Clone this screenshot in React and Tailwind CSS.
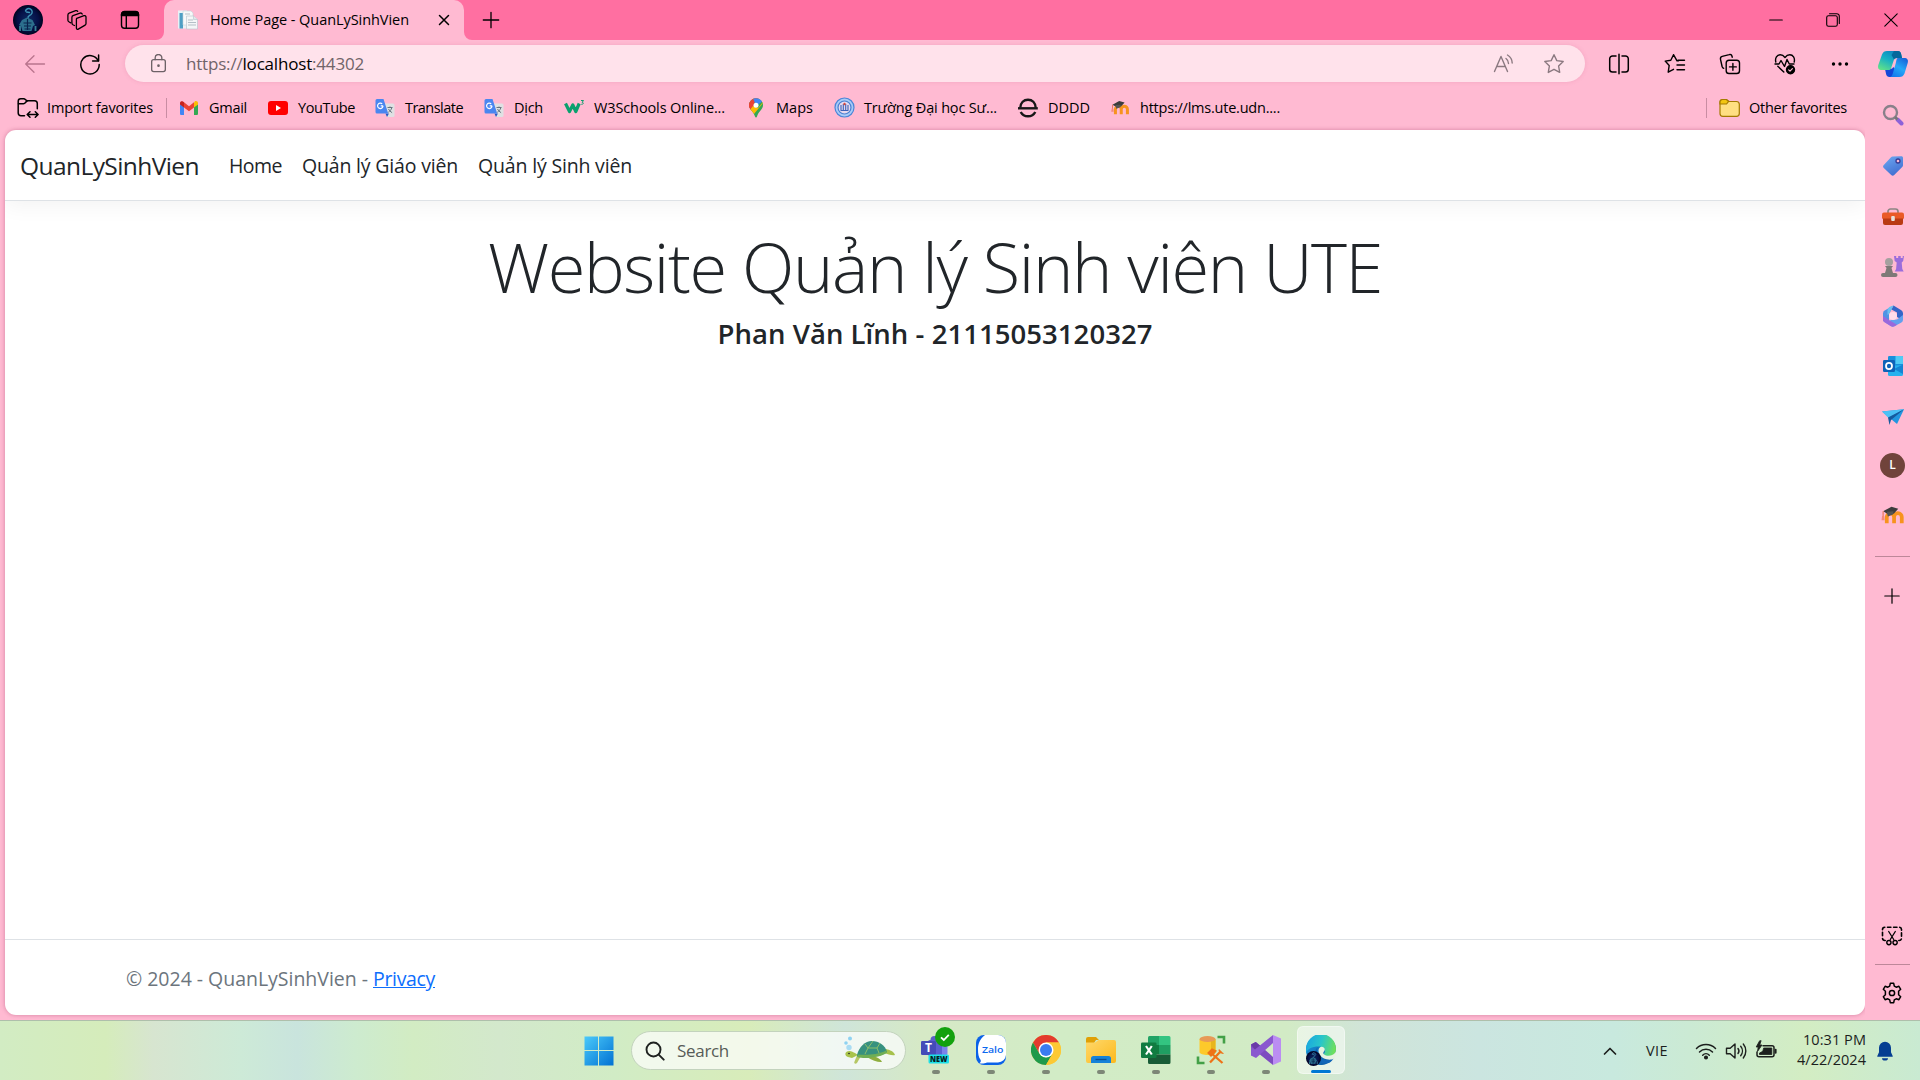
import { useLayoutEffect, useRef } from "react";

/* Single line of text whose letter spacing is tuned so that it fills `w` pixels. */
function Line({ w, className = "", children }) {
  const ref = useRef(null);
  useLayoutEffect(() => {
    const el = ref.current;
    el.style.letterSpacing = "0px";
    const natural = el.getBoundingClientRect().width;
    el.style.letterSpacing = `${(w - natural) / el.textContent.length}px`;
  }, [w]);
  return (
    <span ref={ref} className={`inline-block shrink-0 whitespace-nowrap ${className}`}>
      {children}
    </span>
  );
}

function Icon({ size = 20, className = "", children, vb = "0 0 20 20", sw = 1.3 }) {
  return (
    <svg width={size} height={size} viewBox={vb} className={`shrink-0 ${className}`} fill="none" stroke="currentColor" strokeWidth={sw} strokeLinecap="round" strokeLinejoin="round">
      {children}
    </svg>
  );
}

const Avatar = ({ size = 30, id = "av" }) => (
  <svg width={size} height={size} viewBox="0 0 30 30" className="shrink-0">
    <defs>
      <radialGradient id={id}>
        <stop offset="0" stopColor="#0c2a63" />
        <stop offset="0.7" stopColor="#050f45" />
        <stop offset="1" stopColor="#01031f" />
      </radialGradient>
    </defs>
    <circle cx="15" cy="15" r="15" fill={`url(#${id})`} />
    <g fill="none" stroke="#3d93b5" strokeWidth="1.4" strokeLinecap="round">
      <path d="M12.500 6a3.400 3.400 0 1 1 5.500 3.500c-1.500 1.200-3.500 1.200-3 3.500" />
      <path d="M13.500 7l3 .5" />
    </g>
    <path d="M9 15l5-2.500 5.500 2.500 2.500 5-2 1-1.500 5h-9l-1.500-5-2-1z" fill="#2c6f8d" />
    <path d="M10.500 18h8M11 21h7M11.500 24h6M14.500 14v11" stroke="#08224d" strokeWidth="1.2" />
    <path d="M7 21v5M22.500 21v5" stroke="#377f96" strokeWidth="1.8" />
  </svg>
);

const Workspaces = () => (
  <Icon size={22} vb="0 0 22 22" sw={1.3}>
    <path d="M10.700 9.300l7.300-2.600c1-.3 2 .3 2 1.300v6.500c0 .7-.3 1.300-.9 1.600l-6.800 4c-1 .5-1.900 0-1.900-1V10.400c0-.5 0-.8.3-1.100z" />
    <path d="M8.500 16.500l-1.200-.5c-.9-.4-1.400-.9-1.400-1.900V8.400c0-.9.3-1.400 1.100-1.700l7-2.600c1-.3 1.800 0 2.200 1" />
    <path d="M4.800 13.800l-1.600-.8c-.8-.4-1.300-.9-1.300-1.800V6c0-.9.400-1.500 1.200-1.800l6.600-2.500c.8-.3 1.600 0 2 .7" />
  </Icon>
);

const TabActions = () => (
  <Icon size={20} sw={1.4}>
    <rect x="1.500" y="1.700" width="17" height="16.600" rx="3" />
    <path d="M1.500 5.500V4.500a3 3 0 0 1 3-3h11a3 3 0 0 1 3 3v1z" fill="currentColor" />
    <path d="M6.300 6v12" />
  </Icon>
);

const PageIcon = () => (
  <svg width="20" height="20" viewBox="0 0 20 20" className="shrink-0">
    <rect x="0" y="0.500" width="9" height="18" fill="#e9f1f5" />
    <rect x="1.500" y="3" width="3.500" height="15.500" fill="#4d9fc4" />
    <path d="M5 1h8l2 2v12H5z" fill="#f7f9fa" stroke="#c5d3da" strokeWidth=".6" />
    <path d="M8.500 6h7l4 3.500V19h-11z" fill="#f4f6f7" stroke="#b5c3cb" strokeWidth=".6" />
    <path d="M10 10h5M10 12.500h8M10 15h8M7 4h5" stroke="#b3bfc6" strokeWidth="1" />
    <path d="M15.500 6v3.500h4" fill="#dfe7eb" stroke="#b5c3cb" strokeWidth=".6" />
  </svg>
);

const GmailIcon = () => (
  <svg width="20" height="20" viewBox="0 0 20 20" className="shrink-0">
    <path d="M1 6v9.500A1.300 1.300 0 0 0 2.300 17H5V8.500z" fill="#4285f4" />
    <path d="M15 8.500V17h2.700a1.300 1.300 0 0 0 1.300-1.500V6z" fill="#34a853" />
    <path d="M15 4.800v4.700l4-3V5c0-1.900-2-2.700-3.300-1.600z" fill="#fbbc04" />
    <path d="M5 9.500V4.300l5 3.900 5-3.900v5.200l-5 3.800z" fill="#ea4335" />
    <path d="M1 5v1.500l4 3V4.300l-.7-.6C3 2.700 1 3.300 1 5z" fill="#c5221f" />
  </svg>
);

const YouTubeIcon = () => (
  <svg width="20" height="20" viewBox="0 0 20 20" className="shrink-0">
    <rect y="3" width="20" height="14" rx="3" fill="#ff0000" />
    <path d="M8 7v6l5-3z" fill="#fff" />
  </svg>
);

const TranslateIcon = () => (
  <svg width="20" height="20" viewBox="0 0 20 20" className="shrink-0">
    <path d="M8 5.500h10a1.500 1.500 0 0 1 1.500 1.500v10.500A1.500 1.500 0 0 1 18 19h-6z" fill="#dfe1e3" />
    <path d="M10.500 15.500h3.500L12 19z" fill="#2a56c6" />
    <path d="M2 1h6.500l4.700 14.500H2A1.500 1.500 0 0 1 .5 14V2.500A1.500 1.500 0 0 1 2 1z" fill="#4a86f0" />
    <path d="M8 7.800H5.700M8 7.800a2.700 2.700 0 1 1-.8-1.900" fill="none" stroke="#fff" strokeWidth="1.200" />
    <path d="M12.500 9.500h5M15 8.500v1M16.800 9.800c-.5 2-2 3.500-3.500 4.500M13.500 11c.8 1.600 2 2.700 3.600 3.700" fill="none" stroke="#66757f" strokeWidth="1" />
  </svg>
);

const W3Icon = () => (
  <svg width="22" height="20" viewBox="0 0 22 20" className="shrink-0">
    <path d="M1.500 5.500l4 8 3.300-6.500 3 6.500 3.400-8" fill="none" stroke="#0aa06e" strokeWidth="3.200" strokeLinejoin="round" />
    <path d="M17 2.500h2.500l-1.300 1.800c1.500 0 1.600 2.300-.9 2" fill="none" stroke="#0aa06e" strokeWidth="1" />
  </svg>
);

const MapsIcon = () => (
  <svg width="20" height="20" viewBox="0 0 20 20" className="shrink-0">
    <defs>
      <clipPath id="pin">
        <path d="M10 0.300a7 7 0 0 0-7 7c0 4.200 4.500 6 6 11.200.3 1.300 1.700 1.300 2 0C12.500 13.300 17 11.500 17 7.300a7 7 0 0 0-7-7z" />
      </clipPath>
    </defs>
    <g clipPath="url(#pin)">
      <path d="M0 0h20v20H0z" fill="#34a853" />
      <path d="M0 14L14 -1H0z" fill="#ea4335" />
      <path d="M7 0h10v3l-7 5z" fill="#4285f4" />
      <path d="M2 8l3-4.500L10 7 4 14z" fill="#ea4335" />
      <path d="M3 13l4-5 5 2 5-6v1L8 16z" fill="#fbbc04" />
    </g>
    <circle cx="10" cy="7.300" r="2.500" fill="#fff" />
  </svg>
);

const SchoolIcon = () => (
  <svg width="21" height="21" viewBox="0 0 21 21" className="shrink-0">
    <circle cx="10.500" cy="10.500" r="9.500" fill="#a9cbf8" stroke="#4a86d8" strokeWidth="1.200" />
    <circle cx="10.500" cy="10.500" r="6.500" fill="#e6d9ee" stroke="#4a7fd0" strokeWidth="1.200" />
    <path d="M7 8v5M9.300 7v7M11.700 7v7M14 8v5M6.500 13.500h8" stroke="#3d62b8" strokeWidth="1.100" />
    <circle cx="10.500" cy="7" r="1.200" fill="#d6493c" />
  </svg>
);

const RingEIcon = () => (
  <svg width="20" height="20" viewBox="0 0 20 20" className="shrink-0" fill="none" stroke="#171717" strokeWidth="2.400">
    <path d="M2.300 9.800C2.500 4.500 5.800 1.700 10 1.700s7.500 2.800 7.700 8.100" />
    <path d="M0 10.300h19.800" strokeWidth="2.400" />
    <path d="M2.700 14c1.500 2.800 4.200 4.300 7.300 4.300s5.800-1.500 7.300-4.300" />
  </svg>
);

const MoodleIcon = ({ size = 20 }) => (
  <svg width={size} height={size} viewBox="0 0 24 24" className="shrink-0">
    <path d="M6.500 19.500v-6a3.500 3.500 0 0 1 7 0v6M13.500 13.500a3.700 3.700 0 0 1 7.400 0v6" fill="none" stroke="#f7931e" strokeWidth="3.600" />
    <path d="M3 8l8-4.500 6.500 2-4 4.500-4.500 1.500z" fill="#3c3c3c" />
    <path d="M6.500 8.500l1 4.500 5-2 .5-3z" fill="#555" />
    <path d="M3 8v6" stroke="#eb7a63" strokeWidth="1.200" />
    <path d="M2 12.500h2l.5 4H1.500z" fill="#f4897a" />
  </svg>
);

const ImportIcon = () => (
  <Icon size={22} vb="0 0 22 22" sw={1.500}>
    <path d="M7.500 18.700H4A2.800 2.800 0 0 1 1.200 16V4.300c0-1.500 1-2.500 2.500-2.500h3c1.800 0 2 2 3.800 2h7c1.700 0 2.800 1 2.800 2.800v5.200" />
    <path d="M1.500 6.800h5c2 0 2.200-2.500 4-3" />
    <path d="M10.500 17.500h10.300M13 14.800l-2.800 2.700 2.800 2.700M18.300 14.800l2.800 2.700-2.800 2.700" />
  </Icon>
);

const FolderIcon = () => (
  <svg width="22" height="20" viewBox="0 0 22 20" className="shrink-0" stroke="#a47a00" strokeWidth="1.200">
    <path d="M1 4a2.500 2.500 0 0 1 2.500-2.500h4L10 3.500h7.500A2.800 2.800 0 0 1 20.300 6v9.500a2.800 2.800 0 0 1-2.800 2.800H3.800A2.800 2.800 0 0 1 1 15.500z" fill="#ffdf82" />
    <path d="M1 4a2.500 2.500 0 0 1 2.500-2.500h4L9.500 3.500 7.500 6H1z" fill="#f2c511" />
  </svg>
);

const bookmarks = [
  { icon: <GmailIcon />, text: "Gmail", w: 38, cell: "w-[89px]" },
  { icon: <YouTubeIcon />, text: "YouTube", w: 57, cell: "w-[107px]" },
  { icon: <TranslateIcon />, text: "Translate", w: 58, cell: "w-[109px]" },
  { icon: <TranslateIcon />, text: "Dịch", w: 29, cell: "w-[80px]" },
  { icon: <W3Icon />, text: "W3Schools Online...", w: 131, cell: "w-[182px]" },
  { icon: <MapsIcon />, text: "Maps", w: 37, cell: "w-[88px]" },
  { icon: <SchoolIcon />, text: "Trường Đại học Sư...", w: 133, cell: "w-[184px]" },
  { icon: <RingEIcon />, text: "DDDD", w: 42, cell: "w-[92px]" },
  { icon: <MoodleIcon />, text: "https://lms.ute.udn....", w: 140, cell: "w-[172px]" },
];

function TabStrip() {
  return (
    <div className="flex h-10 shrink-0 items-center bg-[#ff6fa1] text-black">
      <div className="flex w-[156px] items-center pl-[13px]">
        <Avatar />
        <div className="ml-[23px]"><Workspaces /></div>
        <div className="ml-8"><TabActions /></div>
      </div>
      <svg width="8" height="40" className="shrink-0"><path d="M8 40V32a8 8 0 0 1-8 8z" fill="#ffbad2" /></svg>
      <div className="flex h-10 w-[300px] shrink-0 items-center rounded-t-[10px] bg-[#ffbad2] pl-[14px]">
        <PageIcon />
        <Line w={199} className="ml-3 text-[14.500px]">Home Page - QuanLySinhVien</Line>
        <Icon size={12} vb="0 0 12 12" className="ml-[29px]" sw={1.500}><path d="M1.500 1.500l9 9M10.500 1.500l-9 9" /></Icon>
      </div>
      <svg width="8" height="40" className="shrink-0"><path d="M0 40V32a8 8 0 0 0 8 8z" fill="#ffbad2" /></svg>
      <Icon size={18} vb="0 0 18 18" className="ml-[10px]" sw={1.300}><path d="M9 1.300v15.400M1.300 9h15.400" /></Icon>
      <div className="ml-auto flex items-center pr-[22px]">
        <Icon size={14} vb="0 0 14 14" sw={1.100}><path d="M.7 7h12.600" /></Icon>
        <Icon size={14} vb="0 0 14 14" className="ml-[43px]" sw={1.100}>
          <rect x=".7" y="2.700" width="10.600" height="10.600" rx="1.800" />
          <path d="M3.500.7h7.300a2.500 2.500 0 0 1 2.500 2.500v7.300" />
        </Icon>
        <Icon size={14} vb="0 0 14 14" className="ml-[44px]" sw={1.100}><path d="M.8.8l12.400 12.400M13.200.8L.8 13.200" /></Icon>
      </div>
    </div>
  );
}

function Toolbar() {
  return (
    <div className="flex h-[47px] shrink-0 items-center pl-6 text-black">
      <Icon size={22} vb="0 0 22 22" className="text-[#b9748d]" sw={1.300}><path d="M20.500 11H2M10 2.700L1.700 11l8.300 8.300" /></Icon>
      <Icon size={22} vb="0 0 22 22" className="ml-[33px]" sw={1.500}>
        <path d="M19.300 7.800A9.200 9.200 0 1 0 20.200 11.500" />
        <path d="M19.600 2v6h-6" />
      </Icon>
      <div className="ml-6 flex h-[37px] w-[1460px] items-center rounded-full bg-[#ffe2eb] pl-[24px] shadow-[0_0_4px_rgba(190,80,120,0.18)]">
        <Icon size={19} vb="0 0 18 20" className="text-[#6d6267]" sw={1.400}>
          <rect x="1.800" y="6" width="14.400" height="12.600" rx="2.200" />
          <path d="M5.500 6V4a3.500 3.500 0 0 1 7 0v2" />
          <circle cx="9" cy="12.300" r=".7" fill="currentColor" />
        </Icon>
        <Line w={178} className="ml-[18px] text-[17px] text-[#716469]">https://<span className="text-black">localhost</span>:44302</Line>
        <Icon size={22} vb="0 0 22 22" className="mr-[28px] ml-auto text-[#8b7980]" sw={1.400}>
          <path d="M1.500 18.500L8 3.500l6.500 15M3.700 13.500h8.600" />
          <path d="M13 5.500c1.800 1.300 2.500 2.800 2.500 5M14.500 2c3 1.800 4.700 4.700 4.700 8" />
        </Icon>
        <Icon size={22} vb="0 0 22 22" className="mr-[20px] text-[#8b7980]" sw={1.400}>
          <path d="M11 1.700l2.800 5.900 6.400.9-4.600 4.500 1.100 6.400L11 16.300l-5.700 3.100 1.100-6.400L1.800 8.500l6.400-.9z" />
        </Icon>
      </div>
      <Icon size={22} vb="0 0 22 22" className="ml-[23px]" sw={1.500}>
        <path d="M8 3H4.500A2.800 2.800 0 0 0 1.700 5.800v10.400A2.800 2.800 0 0 0 4.500 19H8M14 3h3.500a2.800 2.800 0 0 1 2.800 2.800v10.400a2.800 2.800 0 0 1-2.800 2.800H14M11 1.200v19.600" />
      </Icon>
      <Icon size={22} vb="0 0 22 22" className="ml-[34px]" sw={1.400}>
        <path d="M14.500 7.800h-1.500L9.500 1.700 6.800 7.200l-5.600.9 4 4.300-1 6.800L9.500 16.300M14 7.200h6.500M13 12h7.500M13 16.700h7.500" />
      </Icon>
      <Icon size={22} vb="0 0 22 22" className="ml-[33px]" sw={1.400}>
        <path d="M4.700 15.300c-.9-.3-1.300-.9-1.600-1.800L1.500 6.300c-.3-1.500.2-2.500 1.700-2.900l7-1.800c1.400-.4 2.400.2 2.800 1.600l.3 1" />
        <rect x="7.200" y="7.200" width="13.300" height="13.300" rx="2.800" />
        <path d="M13.900 10.500v6.800M10.500 13.900h6.800" />
      </Icon>
      <Icon size={22} vb="0 0 22 22" className="ml-[33px]" sw={1.400}>
        <path d="M1.800 9C.8 5 3 1.800 6.200 1.800c2 0 3.500 1 4.800 2.700 1.300-1.700 2.800-2.700 4.800-2.700 3.200 0 5.400 3.200 4.400 7.200M3.800 13.300l6 5.700" />
        <path d="M1 11h4l2-3.500 3.500 6 2.500-7 2.300 4.500h4.700" />
        <circle cx="16.500" cy="16.800" r="4" fill="currentColor" />
        <path d="M14.700 16.900l1.300 1.300 2.400-2.500" stroke="#ffbad2" strokeWidth="1.200" />
      </Icon>
      <svg width="18" height="6" className="ml-[35px] shrink-0"><circle cx="2.500" cy="3" r="1.700" /><circle cx="9" cy="3" r="1.700" /><circle cx="15.500" cy="3" r="1.700" /></svg>
    </div>
  );
}

function BookmarksBar() {
  return (
    <div className="flex h-[43px] shrink-0 items-center pb-[2px] pl-[17px] text-[14.500px] text-black">
      <ImportIcon />
      <Line w={106} className="ml-2">Import favorites</Line>
      <div className="ml-[13px] h-5 w-px bg-[#c98da3]" />
      <div className="ml-[12px] flex items-center">
        {bookmarks.map((b) => (
          <div key={b.text} className={`flex shrink-0 items-center ${b.cell}`}>
            <div className="flex w-[30px] shrink-0">{b.icon}</div>
            <Line w={b.w}>{b.text}</Line>
          </div>
        ))}
      </div>
      <div className="ml-auto flex items-center pr-[18px]">
        <div className="h-5 w-px bg-[#c98da3]" />
        <div className="ml-3"><FolderIcon /></div>
        <Line w={98} className="ml-[8px]">Other favorites</Line>
      </div>
    </div>
  );
}

function WebPage() {
  return (
    <main className="ml-[5px] flex h-[885px] w-[1860px] shrink-0 flex-col overflow-hidden rounded-[11px] bg-white text-[#212529] shadow-[0_0_4px_rgba(160,60,100,0.45)]">
      <nav className="flex h-[71px] shrink-0 items-center border-b border-[#dee2e6] pt-[2px] pl-[15px] shadow-[0_5px_20px_rgba(0,0,0,0.05)]">
        <Line w={179} className="text-[24.500px]">QuanLySinhVien</Line>
        <Line w={53} className="ml-[30px] text-[19.500px]">Home</Line>
        <Line w={156} className="ml-[20px] text-[19.500px]">Quản lý Giáo viên</Line>
        <Line w={154} className="ml-[20px] text-[19.500px]">Quản lý Sinh viên</Line>
      </nav>
      <section className="flex flex-col items-center pt-[24px]">
        <h1 className="h-[84px] text-[68.500px] leading-[84px] font-light"><Line w={894}>Website Quản lý Sinh viên UTE</Line></h1>
        <h4 className="mt-[7px] h-9 text-[27.500px] leading-9 font-semibold"><Line w={435}>Phan Văn Lĩnh - 21115053120327</Line></h4>
      </section>
      <footer className="mt-auto flex h-[76px] items-center border-t border-[#dee2e6] pt-[3px] pl-[121px] text-[19.500px] text-[#6c757d]">
        <Line w={247} className="whitespace-pre">{"© 2024 - QuanLySinhVien - "}</Line>
        <Line w={62} className="text-[#0d6efd] underline">Privacy</Line>
      </footer>
    </main>
  );
}

const Copilot = () => (
  <svg width="32" height="28" viewBox="0 0 32 28">
    <defs>
      <linearGradient id="cpA" x1="0.800" y1="0" x2="0.200" y2="1"><stop offset="0" stopColor="#0b7fc0" /><stop offset=".5" stopColor="#18b0c4" /><stop offset="1" stopColor="#5fe08a" /></linearGradient>
      <linearGradient id="cpB" x1="0.800" y1="0" x2="0.200" y2="1"><stop offset="0" stopColor="#1a62d8" /><stop offset=".5" stopColor="#25a8f8" /><stop offset="1" stopColor="#1478ec" /></linearGradient>
    </defs>
    <path d="M8 19h5c2 0 2.700-.7 3.200-2l3.800 4-3 6H12.500c-2 0-2.800-1-3.300-2.500z" fill="#1347d8" />
    <path d="M10 1h11c1.700 0 2.500 1 3 2.500L25 8h-5c-2 0-3 1-3.500 3l-2.300 7c-.5 1.400-1.300 2-2.700 2H5C1.500 20 .5 18 1.300 15L5 4.500C6 2 7.500 1 10 1z" fill="url(#cpA)" />
    <path d="M17 1h4c1.700 0 2.500 1 3 2.500L25 8h-5c-2 0-2.800 1-3 1.500L14.500 5z" fill="#05689c" />
    <path d="M20.500 8H27c3.500 0 4.500 2 3.700 5L27.500 23.500c-1 2.500-2.500 3.500-5 3.500H13c1.500-.5 2.300-2 2.800-3.500l3-10.500C19.500 10 19.500 9 20.500 8z" fill="url(#cpB)" />
  </svg>
);

const sideIcons = [
  <svg key="search" width="22" height="22" viewBox="0 0 22 22" fill="none"><circle cx="8.500" cy="8.500" r="6.500" stroke="#88808a" strokeWidth="2.400" /><path d="M15.500 15.500l4 4" stroke="#8c62d9" strokeWidth="4" strokeLinecap="round" /><path d="M13 13l2.500 2.500" stroke="#777" strokeWidth="2.500" /></svg>,
  <svg key="tag" width="22" height="22" viewBox="0 0 22 22" className="mt-[2px]"><defs><linearGradient id="tg" x1="0" y1="0" x2="0.500" y2="1"><stop offset="0" stopColor="#6faaf2" /><stop offset="1" stopColor="#4270d2" /></linearGradient></defs><path d="M10.500 1.500 19 1.200c1.500 0 2 .5 2 2v7c0 .8-.3 1.300-.8 1.800l-8 8c-1 1-2 1-3 0L1.800 13c-1-1-1-2 0-3L9 2.300c.4-.5.900-.8 1.500-.8z" fill="url(#tg)" /><circle cx="16" cy="6" r="2" fill="#f6b8d4" stroke="#3a3a92" strokeWidth="1.300" /></svg>,
  <svg key="tools" width="24" height="22" viewBox="0 0 24 22" className="mt-[5px]"><path d="M7 6V4.500A2.500 2.500 0 0 1 9.500 2h5A2.500 2.500 0 0 1 17 4.500V6" fill="none" stroke="#8d8583" strokeWidth="1.700" /><rect x="1" y="5.500" width="22" height="7" rx="2" fill="#ea5a27" /><path d="M2 11.500h20V16a2 2 0 0 1-2 2H4a2 2 0 0 1-2-2z" fill="#b93a14" /><rect x="10.200" y="9" width="3.600" height="5" rx="1" fill="#e7e1dc" /></svg>,
  <svg key="chess" width="24" height="24" viewBox="0 0 24 24" className="mt-px"><path d="M13 2h2.200v2h2V2h2.500v2h2V2H23l-.8 5-1.500 1.500.6 6.500 1.400 2.500h-9l1.400-2.500.6-6.500L13.700 7z" fill="#9b6ddb" /><circle cx="8" cy="8" r="4" fill="#a5a09f" /><path d="M4 12h8l-1.500 2 1.500 5h2.500a1.500 1.500 0 0 1 0 4H2a1.500 1.500 0 0 1 0-4h2l1.500-5z" fill="#7e7977" /></svg>,
  <svg key="m365" width="22" height="22" viewBox="0 0 22 22" className="mt-[2px]"><path d="M11.500.5L3.500 5A3.500 3.500 0 0 0 1 8.500v6.800c.5 2 3.500 2.300 6 .7V9z" fill="#4f93e4" /><path d="M11.500.5l7 4.200A4 4 0 0 1 21 8v7L15 12V7.500L9.500 4.500z" fill="#3465c8" /><path d="M21 10v5a3.500 3.500 0 0 1-2 2.800l-6.500 3.500c-1.200.6-2.300.6-3.500 0L2.500 17c3 .6 5-1 7-2.500L15 14.500z" fill="#62a0ee" /><path d="M1 11v4.300c.3 1 .9 1.600 1.500 2l6.500 4c1.200.6 2.300.6 3.500 0l2.500-1.500L7 15z" fill="#9a68dc" /><path d="M11.500.5L7 9l-1.500 1V5.500c0-2 1.500-3.500 3-4z" fill="#6ac0f0" /><circle cx="11" cy="11" r="4" fill="#ffdcea" /></svg>,
  <svg key="outlook" width="22" height="22" viewBox="0 0 22 22" className="mt-[2px]"><rect x="6" y="1" width="15" height="17" rx="1.300" fill="#1890dc" /><path d="M13.500 1H20a1 1 0 0 1 1 1v7h-7.500z" fill="#50cbf5" /><path d="M6 11l15-1v9.500a1.500 1.500 0 0 1-1.500 1.500h-12A1.500 1.500 0 0 1 6 19.500z" fill="#27b1ee" /><path d="M12 14l9-4.500v9.500z" fill="#1484d4" /><rect x="1" y="5" width="12" height="12" rx="1.300" fill="#0f63b8" /><ellipse cx="7" cy="11" rx="3" ry="3.200" fill="none" stroke="#fff" strokeWidth="1.800" /></svg>,
  <svg key="plane" width="22" height="20" viewBox="0 0 22 20" className="mt-[3px]"><path d="M0 4.500l22-2.300L15 17z" fill="#2296df" /><path d="M0 4.500l22-2.300L6.500 11z" fill="#4cc1f5" /><path d="M6 10.500l16-8.300L9 13l-1.500 5z" fill="#155a9e" /></svg>,
  <div key="l" className="flex h-[25px] w-[25px] items-center justify-center rounded-full bg-[#70433b] text-[12px] font-semibold text-white">L</div>,
  <MoodleIcon key="moodle" size={25} />,
];

function Sidebar() {
  return (
    <aside className="flex w-[55px] shrink-0 flex-col items-center bg-[#ffbad2] pt-[4px] text-black">
      <div className="mb-[6px] flex h-10 items-center"><Copilot /></div>
      {sideIcons.map((icon, i) => (
        <div key={i} className="flex h-[50px] shrink-0 items-center">{icon}</div>
      ))}
      <div className="mt-[16px] h-px w-[35px] bg-[#bd8799]" />
      <Icon size={16} vb="0 0 16 16" className="mt-[31px] mr-px" sw={1.200}><path d="M8 .8v14.400M.8 8h14.400" /></Icon>
      <Icon size={22} vb="0 0 22 22" className="mt-auto mr-px" sw={1.600}>
        <path d="M4.200 15.500H3.800A2.300 2.300 0 0 1 1.500 13.200V4.500a2.300 2.300 0 0 1 2.300-2.300h14.400a2.300 2.300 0 0 1 2.300 2.300v8.700a2.300 2.300 0 0 1-2.300 2.300h-.4" strokeDasharray="3.400 2.700" />
        <path d="M7.700 6.500l5 8M14.300 6.500l-5 8" strokeWidth="1.300" />
        <circle cx="7.900" cy="17.600" r="2.100" strokeWidth="1.400" /><circle cx="14.100" cy="17.600" r="2.100" strokeWidth="1.400" />
      </Icon>
      <div className="mt-[17px] h-px w-[35px] bg-[#bd8799]" />
      <Icon size={22} vb="0 0 22 22" className="mt-[17px] mr-px mb-[16px]" sw={1.500}>
        <path d="M9.300 1.300h3.400l.6 2.800 1.900 1.100 2.700-.9 1.800 3-2.100 1.900v3.600l2.100 1.900-1.800 3-2.700-.9-1.900 1.100-.6 2.800H9.300l-.6-2.800-1.900-1.100-2.700.9-1.800-3 2.100-1.900V9.200L2.300 7.300l1.800-3 2.700.9 1.900-1.100z" />
        <circle cx="11" cy="11" r="2.600" />
      </Icon>
    </aside>
  );
}

const WindowsLogo = () => (
  <svg width="30" height="30" viewBox="0 0 30 30" className="shrink-0">
    <defs><linearGradient id="win" gradientUnits="userSpaceOnUse" x1="0" y1="0" x2="30" y2="30"><stop offset="0" stopColor="#4ccbfb" /><stop offset="1" stopColor="#0070d2" /></linearGradient></defs>
    <path d="M.5.500H14v13.500H.5zM15 .5h14.500v13.500H15zM.5 15H14v14.500H.5zM15 15h14.500v14.500H15z" fill="url(#win)" />
  </svg>
);

const Turtle = () => (
  <svg width="54" height="32" viewBox="0 0 54 32" className="shrink-0">
    <circle cx="7" cy="3.500" r="2" fill="#8ed2f2" /><circle cx="3" cy="8" r="1.800" fill="#8ed2f2" /><circle cx="6" cy="12.500" r="2.700" fill="#a9dcf3" />
    <path d="M43 14c4 1 8 2.500 9 6-3 1-7-1-11-2z" fill="#a6c14c" />
    <path d="M15 20l-6 3-4-1c-3-1-3.500-4-1-5.500 3-1.500 6 .5 8 1.500z" fill="#a9c34b" />
    <path d="M18 21l-4 7c-1.500 1.500-3.500.5-2.500-1.500l2.500-6z" fill="#b6c765" />
    <path d="M24 22h9c3 1 5 3 6 5-4 .5-9-1-15-5z" fill="#8fae3f" />
    <path d="M14 20c2-8 8-14 15-14s13 4 15 11c-4 4-20 7-30 4z" fill="#37917f" />
    <path d="M15 19.500c8 .5 20 .5 28-4l1 2c-5 4.500-21 7-30 4.500z" fill="#6fae55" />
    <path d="M22 9l3 4-3 6M25 13h9l3-5M34 13l2 5M30 6l-5 7" fill="none" stroke="#8abf6b" strokeWidth="1" />
    <circle cx="6" cy="18.500" r=".8" fill="#222" />
  </svg>
);

const Teams = () => (
  <svg width="36" height="38" viewBox="0 0 36 38">
    <circle cx="14.500" cy="13" r="4" fill="#5b5fc7" />
    <rect x="17" y="14" width="10.500" height="15" rx="3" fill="#7b83eb" /><rect x="8" y="13" width="14" height="16" rx="2" fill="#5a5fd0" />
    <rect x="1" y="14" width="15" height="14" rx="1.300" fill="#454bb8" />
    <text x="8.500" y="25.300" textAnchor="middle" fontSize="12" fontWeight="700" fill="#fff">T</text>
    <rect x="8.500" y="27.500" width="20.500" height="9" rx="1.500" fill="#1de0e8" />
    <text x="18.700" y="35" textAnchor="middle" fontSize="8" fontWeight="800" fill="#062022" textLength="17.500" lengthAdjust="spacingAndGlyphs">NEW</text>
    <circle cx="25" cy="10" r="10" fill="#13a10e" />
    <path d="M21 10.300l2.800 2.700 5-5.200" fill="none" stroke="#fff" strokeWidth="1.800" />
  </svg>
);

const Zalo = () => (
  <svg width="30" height="30" viewBox="0 0 30 30">
    <rect width="30" height="30" rx="8" fill="#0a62e8" />
    <path d="M9 0h13a8 8 0 0 1 8 8v12a8 8 0 0 1-8 7.500H11C8 29 5 28.500 3.500 28.300c1.500-1.300 1.500-2.300 1-3.500C2.500 22 2 19 2 14S4 3.500 9 0z" fill="#fff" />
    <text x="16.700" y="17.500" textAnchor="middle" fontSize="9" fontWeight="600" fill="#0a68f0" textLength="21.500" lengthAdjust="spacingAndGlyphs">Zalo</text>
  </svg>
);

const Chrome = () => (
  <svg width="30" height="30" viewBox="0 0 30 30">
    <circle cx="15" cy="15" r="15" fill="#fcc934" />
    <path d="M2 7.500A15 15 0 0 1 28 7.500H15L8.500 18.700z" fill="#e33b2e" />
    <path d="M2 7.500l6.500 11.200L15 22.500l6.500-3.800L15 30A15 15 0 0 1 2 7.500z" fill="#1e9a4b" />
    <path d="M15 7.500h13A15 15 0 0 1 15 30l6.500-11.300z" fill="#fcc934" />
    <circle cx="15" cy="15" r="7.500" fill="#fff" /><circle cx="15" cy="15" r="6" fill="#3b7cf0" />
  </svg>
);

const Explorer = () => (
  <svg width="30" height="28" viewBox="0 0 30 28">
    <defs><linearGradient id="fx" x1="0" y1="0" x2="1" y2="1"><stop offset="0" stopColor="#ffd86b" /><stop offset="1" stopColor="#fcb91d" /></linearGradient></defs>
    <path d="M0 3a2 2 0 0 1 2-2h8l3 3h-3L8 7H0z" fill="#e0a006" />
    <path d="M0 6.500h9L12.500 4H28a2 2 0 0 1 2 2v19a2 2 0 0 1-2 2H2a2 2 0 0 1-2-2z" fill="url(#fx)" />
    <path d="M5 27v-4.500A2.500 2.500 0 0 1 7.500 20h15a2.500 2.500 0 0 1 2.500 2.500V27z" fill="#1682d8" /><path d="M9.500 23.500h11" stroke="#0b4f94" strokeWidth="1.300" />
  </svg>
);

const Excel = () => (
  <svg width="30" height="28" viewBox="0 0 30 28">
    <path d="M7 1.500A1.500 1.500 0 0 1 8.500 0H18v9H7z" fill="#21a366" /><path d="M18 0h10a1.500 1.500 0 0 1 1.500 1.500V9H18z" fill="#33c481" />
    <path d="M18 9h11.500v9.500H18z" fill="#1f9e62" /><path d="M7 9h11v9.500H7z" fill="#107c41" /><path d="M7 18.500h22.500v8A1.500 1.500 0 0 1 28 28H8.500A1.500 1.500 0 0 1 7 26.500z" fill="#185c37" />
    <rect x="0" y="6.500" width="15.500" height="15.500" rx="1.300" fill="#107c41" />
    <path d="M5 10l5.800 8.500M10.800 10L5 18.500" stroke="#fff" strokeWidth="2.200" />
  </svg>
);

const SqlStudio = () => (
  <svg width="30" height="30" viewBox="0 0 30 30">
    <path d="M3.500 4v13c0 4 16 4 16 0V4z" fill="#fdc92b" /><path d="M15 6v14c3-.5 4.500-1.500 4.500-3V4z" fill="#e8b61b" />
    <ellipse cx="11.500" cy="4" rx="8" ry="3" fill="#e79a57" />
    <path d="M21.500 2h6.500v6.500M2 21.500V28h6.500" fill="none" stroke="#43a047" strokeWidth="2.600" />
    <path d="M14 27.500L25 16M15 18l11.500 10" stroke="#ee7318" strokeWidth="2.300" /><path d="M12 18l4-4 4 2-5 5zM23 14.500l1 3 3.500 1" fill="#ee7318" stroke="#ee7318" strokeWidth="1.300" />
  </svg>
);

const VisualStudio = () => (
  <svg width="30" height="30" viewBox="0 0 30 30">
    <path d="M0 9.500L5 7l17 15v8L4 15.500v6L0 20z" fill="#7d4cc0" />
    <path d="M0 9.500L4.500 7 12 13l-5 5-3-3z" fill="#6a3aa8" />
    <path d="M0 20.500L5 23 22 8V0L4 14.500 0 12z" fill="#8a58cf" />
    <path d="M22 0l8 3.500v23L22 30z" fill="#bb8df2" /><path d="M22 9.500v11L15.500 15z" fill="#d3ecc5" />
  </svg>
);

const Edge = () => (
  <svg width="30" height="30" viewBox="0 0 30 30">
    <defs>
      <linearGradient id="edA" x1="0" y1="0.300" x2="1" y2="0.500"><stop offset="0" stopColor="#1aa7e0" /><stop offset=".5" stopColor="#29c6c9" /><stop offset="1" stopColor="#6fe05a" /></linearGradient>
      <linearGradient id="edB" x1="0" y1="0" x2="1" y2="1"><stop offset="0" stopColor="#1b9ce0" /><stop offset="1" stopColor="#0b4f9c" /></linearGradient>
    </defs>
    <path d="M15 0a15 15 0 1 0 13 22.300L30 14A15 15 0 0 0 15 0z" fill="url(#edB)" />
    <path d="M0 14A15 15 0 0 1 30 14c0 5-3.500 7.500-8 7.500-3.500 0-5-1.500-4-3 2.500-3-.5-7-5.500-7C6 11.500 1 14 .3 18A15 15 0 0 1 0 14z" fill="url(#edA)" />
    <path d="M12 12c-3 6 1 13 9 13 2.500 0 5-.7 7-2.300-1 2-3 4-5 5.300C15 30 9 25 9 19c0-3 1-5.500 3-7z" fill="#1266b8" />
    <path d="M12.500 15.500c0-3 3-4.800 5.200-3 1.600 1.400 1.200 3 0 4.300-1.500 2 1.300 4 4.800 4 2.600 0 5-1.200 6.800-3.300l.7 2.500-1.700 3.500c-2 1.300-5 1.500-7.800.8-5-1.300-8-4.800-8-8.800z" fill="#e7f2e1" />
  </svg>
);

const apps = [
  { key: "teams", el: <div className="-mt-[8px] ml-[5px]"><Teams /></div> },
  { key: "zalo", el: <Zalo /> },
  { key: "chrome", el: <Chrome /> },
  { key: "files", el: <Explorer /> },
  { key: "excel", el: <Excel /> },
  { key: "sql", el: <SqlStudio /> },
  { key: "vs", el: <VisualStudio /> },
];

function Taskbar() {
  return (
    <div className="flex h-[60px] shrink-0 items-center border-t border-[#aebfab] bg-[linear-gradient(90deg,#d2ecc3_0%,#d5ecbb_5.500%,#d7e5d0_8%,#cdead7_12.500%,#c9e4dd_15.500%,#cdebcf_18.500%,#d2ecc3_21.500%,#d3e8cc_26%,#d1ecc5_32%,#d8ecba_39%,#cfe5d9_44%,#d6e9c6_48%,#d2ecc6_55%,#d2ebc5_67%,#d0e4d8_71%,#cbe5e0_77%,#c8e9de_84%,#cbead4_88%,#d3edc3_94%,#c9ead2_100%)] pl-[584px] text-[#1c1f1d]">
      <WindowsLogo />
      <div className="ml-[17px] flex h-[39px] w-[275px] shrink-0 items-center rounded-full border border-[#c3d3bd] bg-white/70 pl-[13px]">
        <Icon size={20} sw={1.900} className="text-[#1f2220]"><circle cx="8.500" cy="8.500" r="7" /><path d="M13.700 13.700l5 5" /></Icon>
        <Line w={52} className="ml-[12px] text-[17px] text-[#575c57]">Search</Line>
        <div className="ml-auto pr-[8px]"><Turtle /></div>
      </div>
      <div className="ml-[2px] flex h-full">
        {apps.map((a) => (
          <div key={a.key} className="flex h-full w-[55px] flex-col items-center">
            <div className="flex h-[49px] items-center pt-[9px]">{a.el}</div>
            <div className="h-1 w-2 rounded-full bg-[#7d8777]" />
          </div>
        ))}
        <div className="mt-[5px] ml-[4px] flex h-12 w-12 flex-col items-center rounded-md border border-white/40 bg-white/50">
          <div className="relative mt-[8px] h-[30px]">
            <Edge />
            <div className="absolute -bottom-px left-0"><Avatar size={15} id="avs" /></div>
          </div>
          <div className="mt-[5px] h-1 w-5 rounded-full bg-[#0078d4]" />
        </div>
      </div>
      <div className="ml-auto flex items-center pr-[27px]">
        <Icon size={14} vb="0 0 14 14" sw={1.700}><path d="M1.500 10L7 4.500l5.500 5.500" /></Icon>
        <Line w={22} className="ml-[29px] text-[14.500px]">VIE</Line>
        <Icon size={22} vb="0 0 22 22" className="ml-[27px]" sw={1.500}>
          <path d="M1.500 8.500a13.500 13.500 0 0 1 19 0M4.500 12a9.200 9.200 0 0 1 13 0M7.700 15.200a4.700 4.700 0 0 1 6.600 0" />
          <circle cx="11" cy="17.500" r="1.300" fill="currentColor" />
        </Icon>
        <Icon size={22} vb="0 0 22 22" className="ml-[8px]" sw={1.400}>
          <path d="M1.500 8.300h3.700L10 4v14l-4.800-4.300H1.500z" /><path d="M13 8.500a4 4 0 0 1 0 5M15.700 6.300a7.300 7.300 0 0 1 0 9.400M18.300 4a11 11 0 0 1 0 14" />
        </Icon>
        <Icon size={22} vb="0 0 22 22" className="ml-[8px]" sw={1.500}>
          <path d="M8 5.800h9a2 2 0 0 1 2 2v6.900a2 2 0 0 1-2 2H4a2 2 0 0 1-2-2V12" />
          <path d="M9 8h7.800v6.500H4.500V13l3-1.500z" fill="currentColor" strokeWidth=".8" />
          <path d="M20.600 9.800v3" strokeWidth="2" /><path d="M4.500 1L1.200 7h2L2.500 11.500 7 5H4.700L6 1z" fill="currentColor" strokeWidth=".8" />
        </Icon>
        <div className="ml-[19px] flex w-[70px] flex-col items-end pb-[2px] text-[14.500px] leading-5">
          <Line w={63}>10:31 PM</Line>
          <Line w={69}>4/22/2024</Line>
        </div>
        <svg width="16" height="20" viewBox="0 0 16 20" className="ml-[11px] shrink-0"><path d="M8 .8a6 6 0 0 0-6 6v4.500L.3 15v.8h15.400V15L14 11.300V6.800a6 6 0 0 0-6-6zM5 17.300h6a3 2.300 0 0 1-6 0z" fill="#063f92" /></svg>
      </div>
    </div>
  );
}

export default function App() {
  return (
    <div className="flex h-[1080px] w-[1920px] flex-col overflow-hidden bg-[#ffbad2] font-['Open_Sans','Noto_Sans',sans-serif]">
      <TabStrip />
      <div className="flex h-[980px] shrink-0">
        <div className="flex w-[1865px] shrink-0 flex-col">
          <Toolbar />
          <BookmarksBar />
          <WebPage />
        </div>
        <Sidebar />
      </div>
      <Taskbar />
    </div>
  );
}
